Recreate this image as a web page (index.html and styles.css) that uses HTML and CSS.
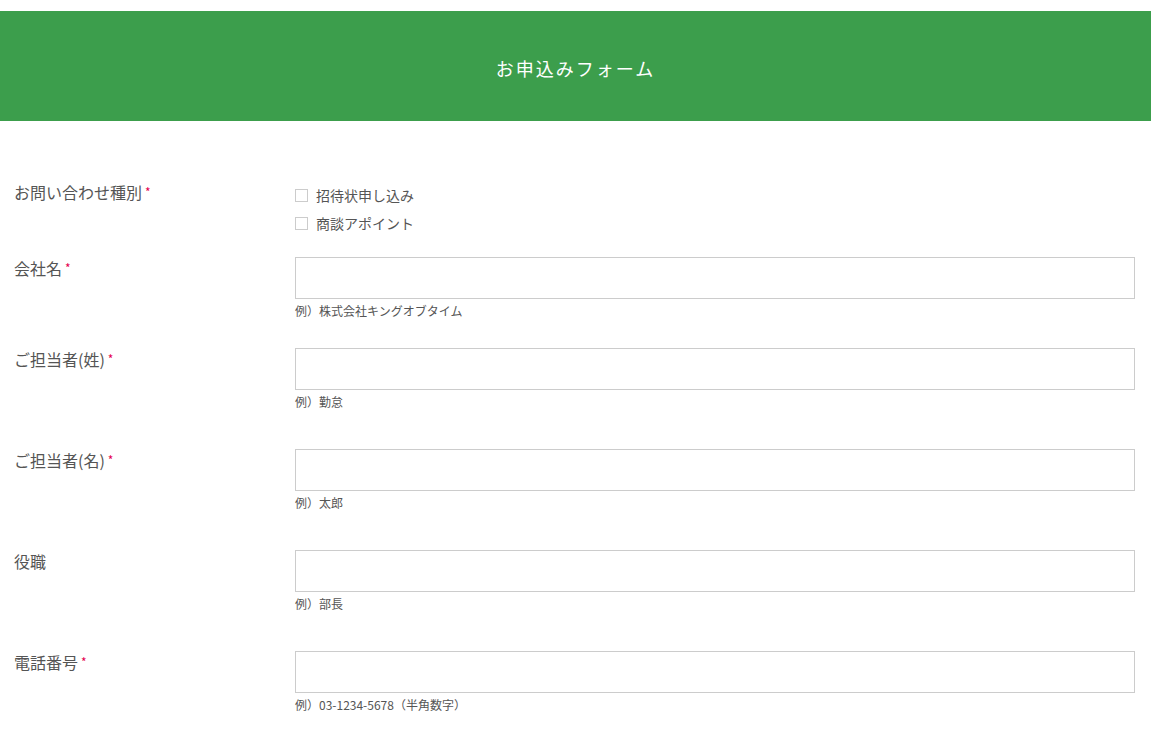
FILE: index.html
```html
<!DOCTYPE html>
<html lang="ja">
<head>
    <meta charset="UTF-8">
    <meta name="viewport" content="width=device-width, initial-scale=1.0">
    <title>お申込みフォーム</title>
    <link rel="stylesheet" href="styles.css">
</head>
<body>
    <header class="form-header">
        <h1>お申込みフォーム</h1>
    </header>

    <form class="entry-form">
        <div class="form-row row-check">
            <div class="form-label">お問い合わせ種別<span class="req">*</span></div>
            <div class="form-field">
                <label class="check-item"><input type="checkbox"><span>招待状申し込み</span></label>
                <label class="check-item"><input type="checkbox"><span>商談アポイント</span></label>
            </div>
        </div>

        <div class="form-row row-first">
            <div class="form-label">会社名<span class="req">*</span></div>
            <div class="form-field">
                <input type="text" class="text-input">
                <p class="hint">例）株式会社キングオブタイム</p>
            </div>
        </div>

        <div class="form-row">
            <div class="form-label">ご担当者(姓)<span class="req">*</span></div>
            <div class="form-field">
                <input type="text" class="text-input">
                <p class="hint">例）勤怠</p>
            </div>
        </div>

        <div class="form-row">
            <div class="form-label">ご担当者(名)<span class="req">*</span></div>
            <div class="form-field">
                <input type="text" class="text-input">
                <p class="hint">例）太郎</p>
            </div>
        </div>

        <div class="form-row">
            <div class="form-label">役職</div>
            <div class="form-field">
                <input type="text" class="text-input">
                <p class="hint">例）部長</p>
            </div>
        </div>

        <div class="form-row">
            <div class="form-label">電話番号<span class="req">*</span></div>
            <div class="form-field">
                <input type="text" class="text-input">
                <p class="hint">例）03-1234-5678（半角数字）</p>
            </div>
        </div>
    </form>
</body>
</html>
```

FILE: styles.css
```css
body {
    font-family: "Noto Sans CJK JP", "Noto Sans", sans-serif;
    margin: 0;
    padding-top: 11px;
    background: #fff;
    color: #555;
}
.form-header {
    background: #3c9e4c;
    height: 110px;
    box-sizing: border-box;
    padding-top: 3px;
    display: flex;
    align-items: center;
    justify-content: center;
}
.form-header h1 {
    margin: 0;
    color: #fff;
    font-size: 18px;
    font-weight: normal;
    letter-spacing: 2px;
}
.entry-form {
    padding: 60px 16px 0 14px;
}
.form-row {
    display: flex;
    margin-bottom: 38px;
}
.row-check {
    margin-bottom: 20px;
}
.row-first {
    margin-bottom: 28px;
}
.form-label {
    width: 281px;
    flex-shrink: 0;
    font-size: 16px;
    line-height: 22px;
}
.req {
    color: #e5004f;
    font-size: 12px;
    margin-left: 3px;
    vertical-align: 2px;
}
.form-field {
    flex: 1;
}
.check-item {
    display: flex;
    align-items: center;
    height: 28px;
    font-size: 14px;
}
.check-item input {
    appearance: none;
    width: 13px;
    height: 13px;
    margin: 0 8px 0 0;
    border: 1px solid #ccc;
    background: #fff;
}
.text-input {
    display: block;
    width: 100%;
    height: 42px;
    box-sizing: border-box;
    border: 1px solid #ccc;
    margin: 0;
    padding: 0 10px;
    font-size: 14px;
}
.hint {
    margin: 3px 0 0;
    font-size: 12px;
    line-height: 18px;
}
```
